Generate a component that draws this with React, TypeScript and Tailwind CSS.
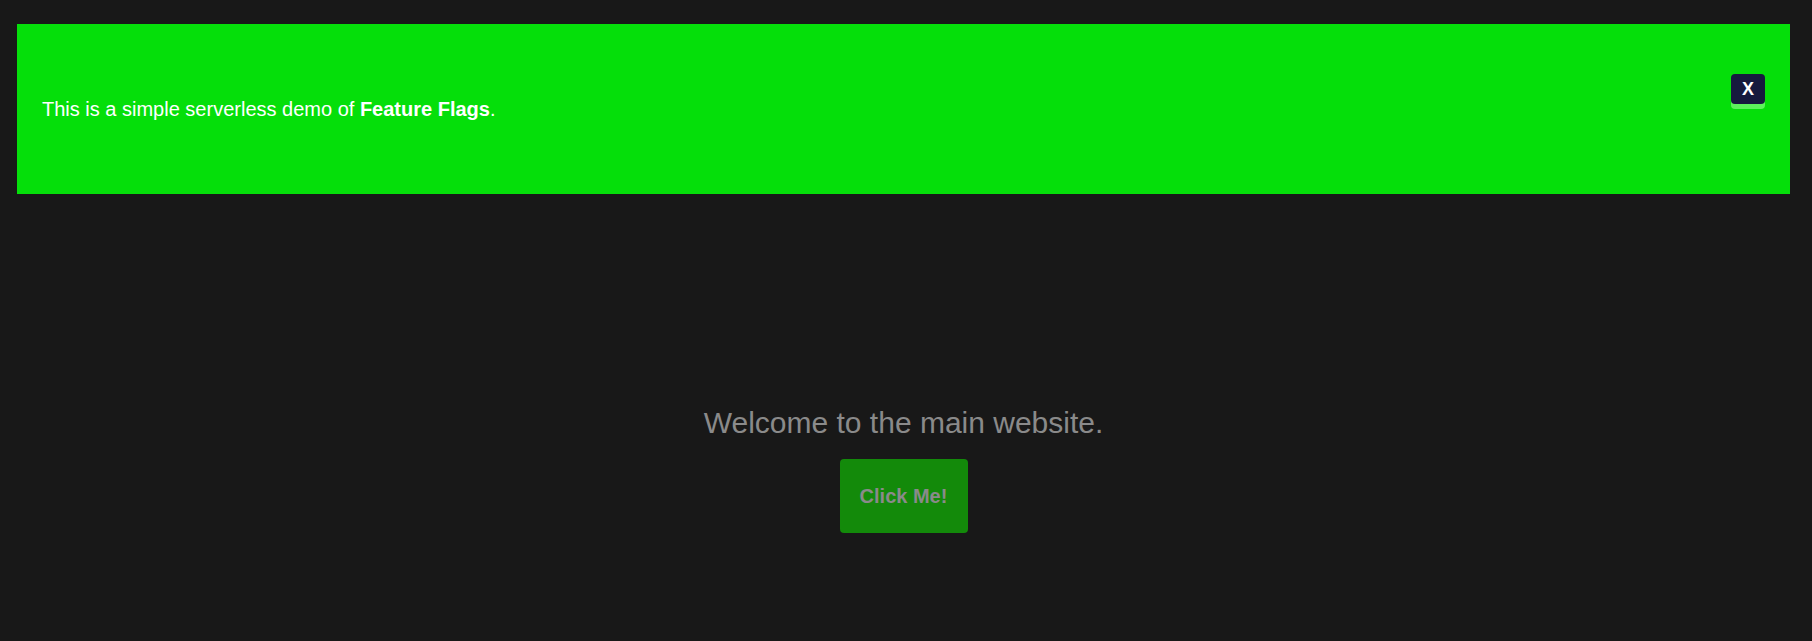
import React from "react";

export default function App() {
  return (
    <div className="min-h-[641px] w-full bg-[#181818] pt-[24px] font-['Liberation_Sans',Arial,sans-serif]">
      <div className="ml-[17px] mr-[22px]">
        <div className="flex h-[170px] justify-between bg-[#05df0a] pl-[25px] pr-[25px]">
          <p className="self-center text-[20px] text-white">
            This is a simple serverless demo of <b>Feature Flags</b>.
          </p>
          <button className="mt-[50px] flex h-[30px] w-[34px] items-center justify-center self-start rounded-[4px] bg-[#161a3e] text-[18px] font-bold leading-none text-white shadow-[0_5px_0_#5cf35c]">
            X
          </button>
        </div>
        <div className="flex flex-col items-center pt-[211px]">
          <h1 className="text-[30px] leading-[35px] text-[#8a8a8a]">Welcome to the main website.</h1>
          <button className="mt-[19px] h-[74px] w-[128px] rounded-[4px] bg-[#138a0a] text-[20px] font-bold text-[#8a8a8a]">
            Click Me!
          </button>
        </div>
      </div>
    </div>
  );
}
